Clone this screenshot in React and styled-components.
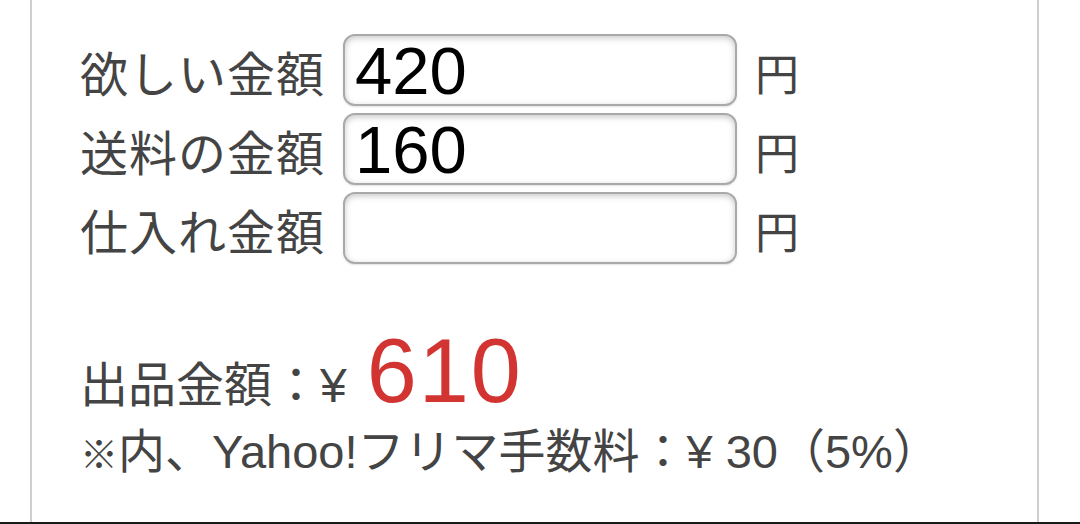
import React from 'react';
import styled, { createGlobalStyle } from 'styled-components';

const GlobalStyle = createGlobalStyle`
  html, body {
    margin: 0;
    padding: 0;
    background: #fff;
  }
  body {
    font-family: "Liberation Sans", "Noto Sans CJK JP", sans-serif;
    color: #444;
  }
`;

const Page = styled.div`
  width: 1080px;
  height: 524px;
  display: flex;
  flex-direction: column;
  overflow: hidden;
`;

const Panel = styled.div`
  flex: 1;
  margin-left: 30px;
  width: 1009px;
  border-left: 2px solid #cfcfcf;
  border-right: 2px solid #cfcfcf;
  padding: 34px 0 0 48px;
  box-sizing: border-box;
`;

const BottomBar = styled.div`
  height: 2px;
  background: #1a1a1a;
`;

const Form = styled.div`
  display: grid;
  grid-template-columns: auto 394px auto;
  column-gap: 18px;
  row-gap: 7px;
  align-items: center;
  justify-content: start;
`;

const Label = styled.label`
  font-size: 48px;
  line-height: 1;
  letter-spacing: 1px;
  color: #444;
  padding-top: 12px;
`;

const Unit = styled.span`
  font-size: 44px;
  line-height: 1;
  color: #444;
  padding-top: 12px;
`;

const AmountInput = styled.input`
  box-sizing: border-box;
  width: 394px;
  height: 72px;
  margin: 0;
  padding: 0 10px;
  border: 2px solid #a9a9a9;
  border-radius: 12px;
  background: #fff;
  box-shadow: inset 0 2px 6px rgba(0, 0, 0, 0.22), 0 1px 2px rgba(0, 0, 0, 0.12);
  font-family: "Liberation Sans", sans-serif;
  font-size: 67px;
  line-height: 1;
  color: #000;
  outline: none;
`;

const Result = styled.div`
  margin-top: 62px;
  display: flex;
  flex-direction: column;
`;

const TotalLine = styled.div`
  display: flex;
  align-items: baseline;
  font-size: 48px;
  line-height: 1;
  color: #444;
`;

const Price = styled.span`
  font-family: "Liberation Sans", sans-serif;
  font-size: 90px;
  line-height: 1;
  letter-spacing: 2px;
  color: #d13431;
  margin-left: 20px;
`;

const FeeLine = styled.div`
  margin-top: 12px;
  font-size: 47px;
  line-height: 1;
  color: #444;
  white-space: nowrap;
`;

const Mark = styled.span`
  font-size: 38px;
  font-weight: bold;
`;

const rows = [
  { label: '欲しい金額', value: '420' },
  { label: '送料の金額', value: '160' },
  { label: '仕入れ金額', value: '' },
];

export default function App() {
  return (
    <Page>
      <GlobalStyle />
      <Panel>
        <Form>
          {rows.map((row) => (
            <React.Fragment key={row.label}>
              <Label>{row.label}</Label>
              <AmountInput type="text" defaultValue={row.value} />
              <Unit>円</Unit>
            </React.Fragment>
          ))}
        </Form>
        <Result>
          <TotalLine>
            出品金額：¥<Price>610</Price>
          </TotalLine>
          <FeeLine>
            <Mark>※</Mark>内、Yahoo!フリマ手数料：¥ 30（5%）
          </FeeLine>
        </Result>
      </Panel>
      <BottomBar />
    </Page>
  );
}
